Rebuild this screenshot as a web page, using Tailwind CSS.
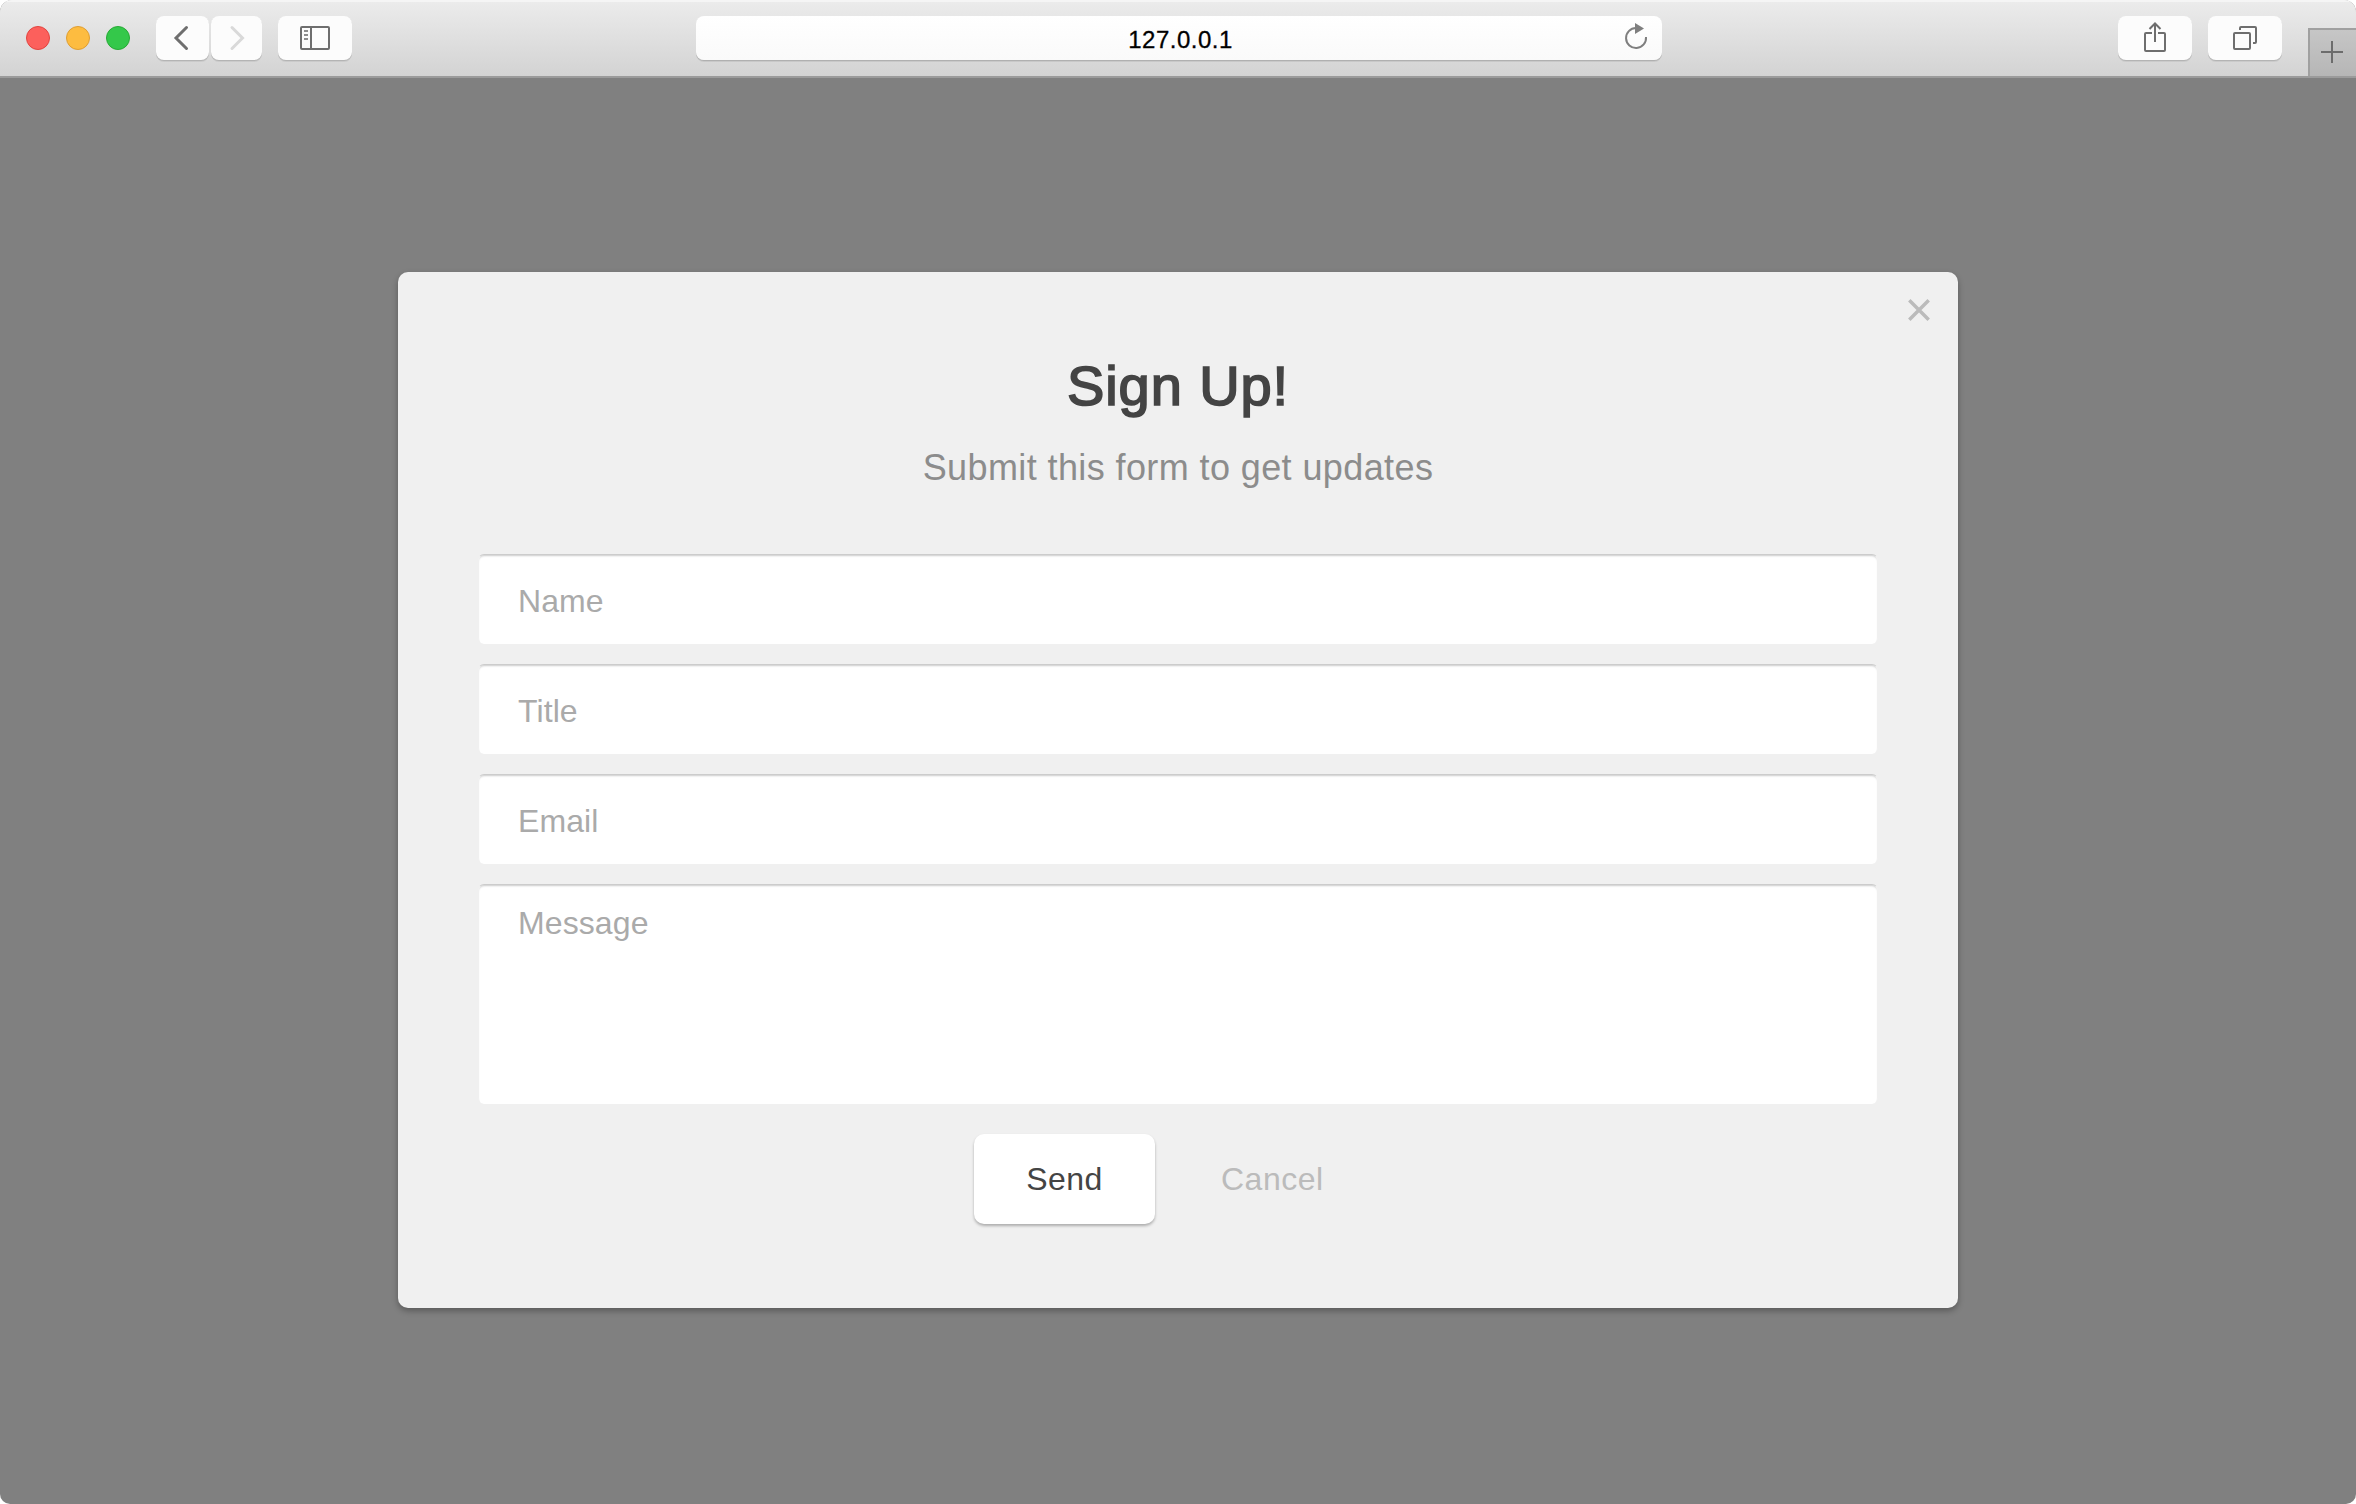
<!DOCTYPE html>
<html lang="en">
<head>
<meta charset="utf-8">
<title>Sign Up</title>
<script src="https://cdn.jsdelivr.net/npm/@tailwindcss/browser@4"></script>
</head>
<body class="bg-white font-['Liberation_Sans',Arial,sans-serif]">
<div class="w-[2356px] h-[1504px] rounded-t-[12px] rounded-b-[10px] overflow-hidden bg-[#808080] flex flex-col">
  <header class="h-[78px] shrink-0 flex items-start border-b-2 border-[#9b9b9b] bg-linear-to-b from-[#ececec] to-[#d3d3d3] shadow-[inset_0_2px_0_#f5f5f5]">
    <div class="flex gap-4 pl-[26px] pt-[26px]">
      <span class="size-6 rounded-full bg-[#fc605c] border border-[#e2443f]"></span>
      <span class="size-6 rounded-full bg-[#fdbc40] border border-[#df9e33]"></span>
      <span class="size-6 rounded-full bg-[#34c84a] border border-[#27aa35]"></span>
    </div>
    <div class="flex gap-[2px] pt-4 ml-[26px]">
      <button class="w-[53px] h-11 rounded-lg bg-[#fcfcfc] shadow-[0_1px_0_#b4b4b4,0_2px_0_#cacaca]">
        <svg class="block" width="53" height="44" fill="none" stroke="#6e6e6e" stroke-width="3" stroke-linecap="round" stroke-linejoin="miter"><path d="M30.5 11.5 20 22 30.5 32.5"/></svg>
      </button>
      <button class="w-[51px] h-11 rounded-lg bg-[#fcfcfc] shadow-[0_1px_0_#b4b4b4,0_2px_0_#cacaca]">
        <svg class="block" width="51" height="44" fill="none" stroke="#d9d9d9" stroke-width="3" stroke-linecap="round"><path d="M21 11.5 31.5 22 21 32.5"/></svg>
      </button>
    </div>
    <button class="w-[74px] h-11 mt-4 ml-4 rounded-lg bg-[#fcfcfc] shadow-[0_1px_0_#b4b4b4,0_2px_0_#cacaca]">
      <svg class="block" width="74" height="44" fill="none" stroke="#6e6e6e" stroke-width="2"><rect x="23" y="11" width="28" height="22" rx="1"/><path d="M33 11v22"/><path stroke="#8e8e8e" d="M26 15h4M26 19h4M26 23h4"/></svg>
    </button>
    <div class="w-[966px] h-11 mt-4 ml-[344px] rounded-lg bg-linear-to-b from-white to-[#fafafa] shadow-[0_1px_0_#b0b0b0,0_2px_0_#c8c8c8] grid grid-cols-[1fr_auto_1fr] items-center">
      <span></span>
      <span class="text-2xl leading-6 tracking-[0.5px] text-black pt-[3px] pl-[3px] [-webkit-text-stroke:0.3px_#000]">127.0.0.1</span>
      <svg class="justify-self-end mr-[12px]" width="28" height="44" fill="none" stroke="#7f7f7f" stroke-width="2"><path d="M14 12A10 10 0 1 0 24 21"/><path d="M13 7 22 12.5 13 18Z" fill="#7f7f7f" stroke="none"/></svg>
    </div>
    <button class="w-[74px] h-11 mt-4 ml-[456px] rounded-lg bg-[#fcfcfc] shadow-[0_1px_0_#b4b4b4,0_2px_0_#cacaca]">
      <svg class="block" width="74" height="44" fill="none" stroke="#6e6e6e" stroke-width="2"><path d="M34 17h-6q-1 0-1 1v16q0 1 1 1h18q1 0 1-1V18q0-1-1-1h-6M37 26V8M31.500 13 37 7.500 42.500 13"/></svg>
    </button>
    <button class="w-[74px] h-11 mt-4 ml-4 rounded-lg bg-[#fcfcfc] shadow-[0_1px_0_#b4b4b4,0_2px_0_#cacaca]">
      <svg class="block" width="74" height="44" fill="none" stroke="#6e6e6e" stroke-width="2"><rect x="26" y="17" width="16" height="16" rx="1"/><path d="M32 14v-2q0-1 1-1h14q1 0 1 1v14q0 1-1 1h-2"/></svg>
    </button>
    <button class="w-12 h-12 mt-7 ml-[26px] border-l-2 border-t-2 border-[#a0a0a0] bg-linear-to-b from-[#c6c6c6] to-[#b6b6b6]">
      <svg class="block" width="46" height="46" fill="none" stroke="#6c6c6c" stroke-width="2"><path d="M11 22h22M22 11v22"/></svg>
    </button>
  </header>
  <main class="flex-1 flex flex-col items-center pt-[194px]">
    <section class="relative w-[1560px] h-[1036px] rounded-[10px] bg-[#f0f0f0] shadow-[0_3px_6px_rgba(0,0,0,0.3)] flex flex-col items-center">
      <button class="absolute right-[28px] top-[27px]" aria-label="Close">
        <svg class="block" width="22" height="22" fill="none" stroke="#bbb" stroke-width="3.5"><path d="M1.300 1.300 20.700 20.700M20.700 1.300 1.300 20.700"/></svg>
      </button>
      <h1 class="mt-[80px] text-[56px] leading-[68px] tracking-[0.9px] text-[#444] [-webkit-text-stroke:1.7px_#444]">Sign Up!</h1>
      <p class="mt-[26px] text-4xl leading-[44px] tracking-[0.4px] text-[#8c8c8c]">Submit this form to get updates</p>
      <form class="mt-[64px] w-[1400px] flex flex-col gap-5 text-[32px] leading-9 tracking-[0.1px] text-[#aaa]">
        <label class="h-[90px] rounded-md bg-white border-x border-x-[#f0f0f0] border-t border-t-[#ccc] shadow-[inset_0_2px_2px_-1px_#ccc] pl-[39px] pt-[28px]">Name</label>
        <label class="h-[90px] rounded-md bg-white border-x border-x-[#f0f0f0] border-t border-t-[#ccc] shadow-[inset_0_2px_2px_-1px_#ccc] pl-[39px] pt-[28px]">Title</label>
        <label class="h-[90px] rounded-md bg-white border-x border-x-[#f0f0f0] border-t border-t-[#ccc] shadow-[inset_0_2px_2px_-1px_#ccc] pl-[39px] pt-[28px]">Email</label>
        <label class="h-[220px] rounded-md bg-white border-x border-x-[#f0f0f0] border-t border-t-[#ccc] shadow-[inset_0_2px_2px_-1px_#ccc] pl-[39px] pt-[20px]">Message</label>
      </form>
      <div class="mt-[30px] w-[1400px] pl-[496px] flex text-[32px] leading-9">
        <button class="w-[181px] h-[90px] rounded-[10px] bg-white text-[#444] tracking-[0.4px] shadow-[0_2px_3px_rgba(0,0,0,0.28)]">Send</button>
        <button class="ml-[66px] h-[90px] text-[#bbb] tracking-[0.5px]">Cancel</button>
      </div>
    </section>
  </main>
</div>
</body>
</html>
